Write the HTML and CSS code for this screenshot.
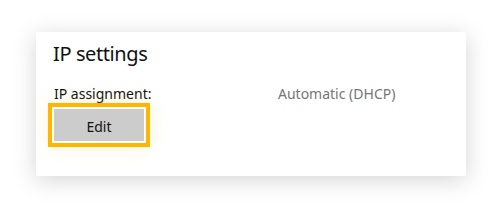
FILE: index.html
```html
<!DOCTYPE html>
<html>
<head>
<meta charset="utf-8">
<link rel="stylesheet" href="styles.css">
</head>
<body>
<div class="card">
  <h2 class="title">IP settings</h2>
  <div class="row">
    <div class="col-label">
      <div class="label">IP assignment:</div>
      <div class="focus-ring"><button class="btn">Edit</button></div>
    </div>
    <div class="value">Automatic (DHCP)</div>
  </div>
</div>
</body>
</html>
```

FILE: styles.css
```css
html, body {
  margin: 0;
  padding: 0;
  background: #ffffff;
}
body {
  width: 502px;
  height: 207px;
  overflow: hidden;
  font-family: "Noto Sans", "Open Sans", sans-serif;
  color: #111;
}
.card {
  margin: 32px 0 0 36px;
  width: 430px;
  height: 144px;
  box-sizing: border-box;
  background: #fff;
  box-shadow: 0 4px 22px rgba(0, 0, 0, 0.17);
  padding: 8px 0 0 17px;
}
.title {
  margin: 0;
  font-size: 20px;
  font-weight: 400;
  line-height: 28px;
  letter-spacing: -0.4px;
  color: #111;
}
.row {
  display: flex;
  margin-top: 17px;
}
.col-label {
  width: 225px;
  display: flex;
  flex-direction: column;
}
.label {
  font-size: 14px;
  line-height: 18px;
  padding-left: 1px;
  color: #111;
}
.focus-ring {
  align-self: flex-start;
  margin: 0 0 0 -5px;
  border: 4px solid #ffb600;
  padding: 2px;
  background: #fff;
  box-shadow: 0 0 18px rgba(255, 190, 40, 0.18);
}
.btn {
  display: block;
  width: 90px;
  height: 32px;
  border: none;
  margin: 0;
  padding: 3px 0 0 0;
  background: #cccccc;
  font-family: "Noto Sans", "Open Sans", sans-serif;
  font-size: 14px;
  line-height: 18px;
  color: #111;
}
.value {
  font-size: 14px;
  line-height: 18px;
  color: #767676;
}
```
